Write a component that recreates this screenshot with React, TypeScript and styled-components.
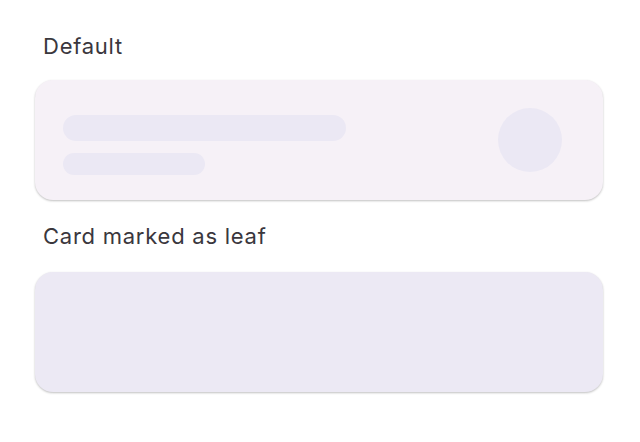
import React from "react";
import styled, { createGlobalStyle } from "styled-components";

const Global = createGlobalStyle`
  html, body { margin: 0; padding: 0; background: #ffffff; }
  body { font-family: Inter, "Noto Sans", sans-serif; }
`;

const Page = styled.div`
  width: 640px;
  height: 442px;
  box-sizing: border-box;
  padding: 31px 37px 0 35px;
  display: flex;
  flex-direction: column;
`;

const Label = styled.div<{ $tight?: boolean }>`
  font-size: 22px;
  line-height: 30px;
  color: #3a373d;
  padding-left: 8px;
  letter-spacing: 0.75px;
  margin-top: ${(p) => (p.$tight ? "-2px" : "0")};
  margin-bottom: ${(p) => (p.$tight ? "21px" : "19px")};
`;

const Card = styled.div<{ $leaf?: boolean }>`
  height: 120px;
  border-radius: 18px;
  background: ${(p) => (p.$leaf ? "#ece9f4" : "#f6f1f7")};
  box-shadow: 0 1px 2px rgba(0, 0, 0, 0.18), 0 1px 3px rgba(0, 0, 0, 0.08);
  box-sizing: border-box;
  padding: 0 41px 0 28px;
  display: flex;
  align-items: center;
  justify-content: space-between;
  margin-bottom: 23px;
`;

const Lines = styled.div`
  display: flex;
  flex-direction: column;
  gap: 12px;
  padding-top: 10px;
`;

const Bar = styled.div<{ $w: number; $h: number }>`
  width: ${(p) => p.$w}px;
  height: ${(p) => p.$h}px;
  border-radius: ${(p) => p.$h / 2}px;
  background: #ebe8f4;
`;

const Avatar = styled.div`
  width: 64px;
  height: 64px;
  border-radius: 50%;
  background: #ebe8f4;
`;

export default function App() {
  return (
    <>
      <Global />
      <Page>
        <Label>Default</Label>
        <Card>
          <Lines>
            <Bar $w={283} $h={26} />
            <Bar $w={142} $h={22} />
          </Lines>
          <Avatar />
        </Card>
        <Label $tight>Card marked as leaf</Label>
        <Card $leaf />
      </Page>
    </>
  );
}
